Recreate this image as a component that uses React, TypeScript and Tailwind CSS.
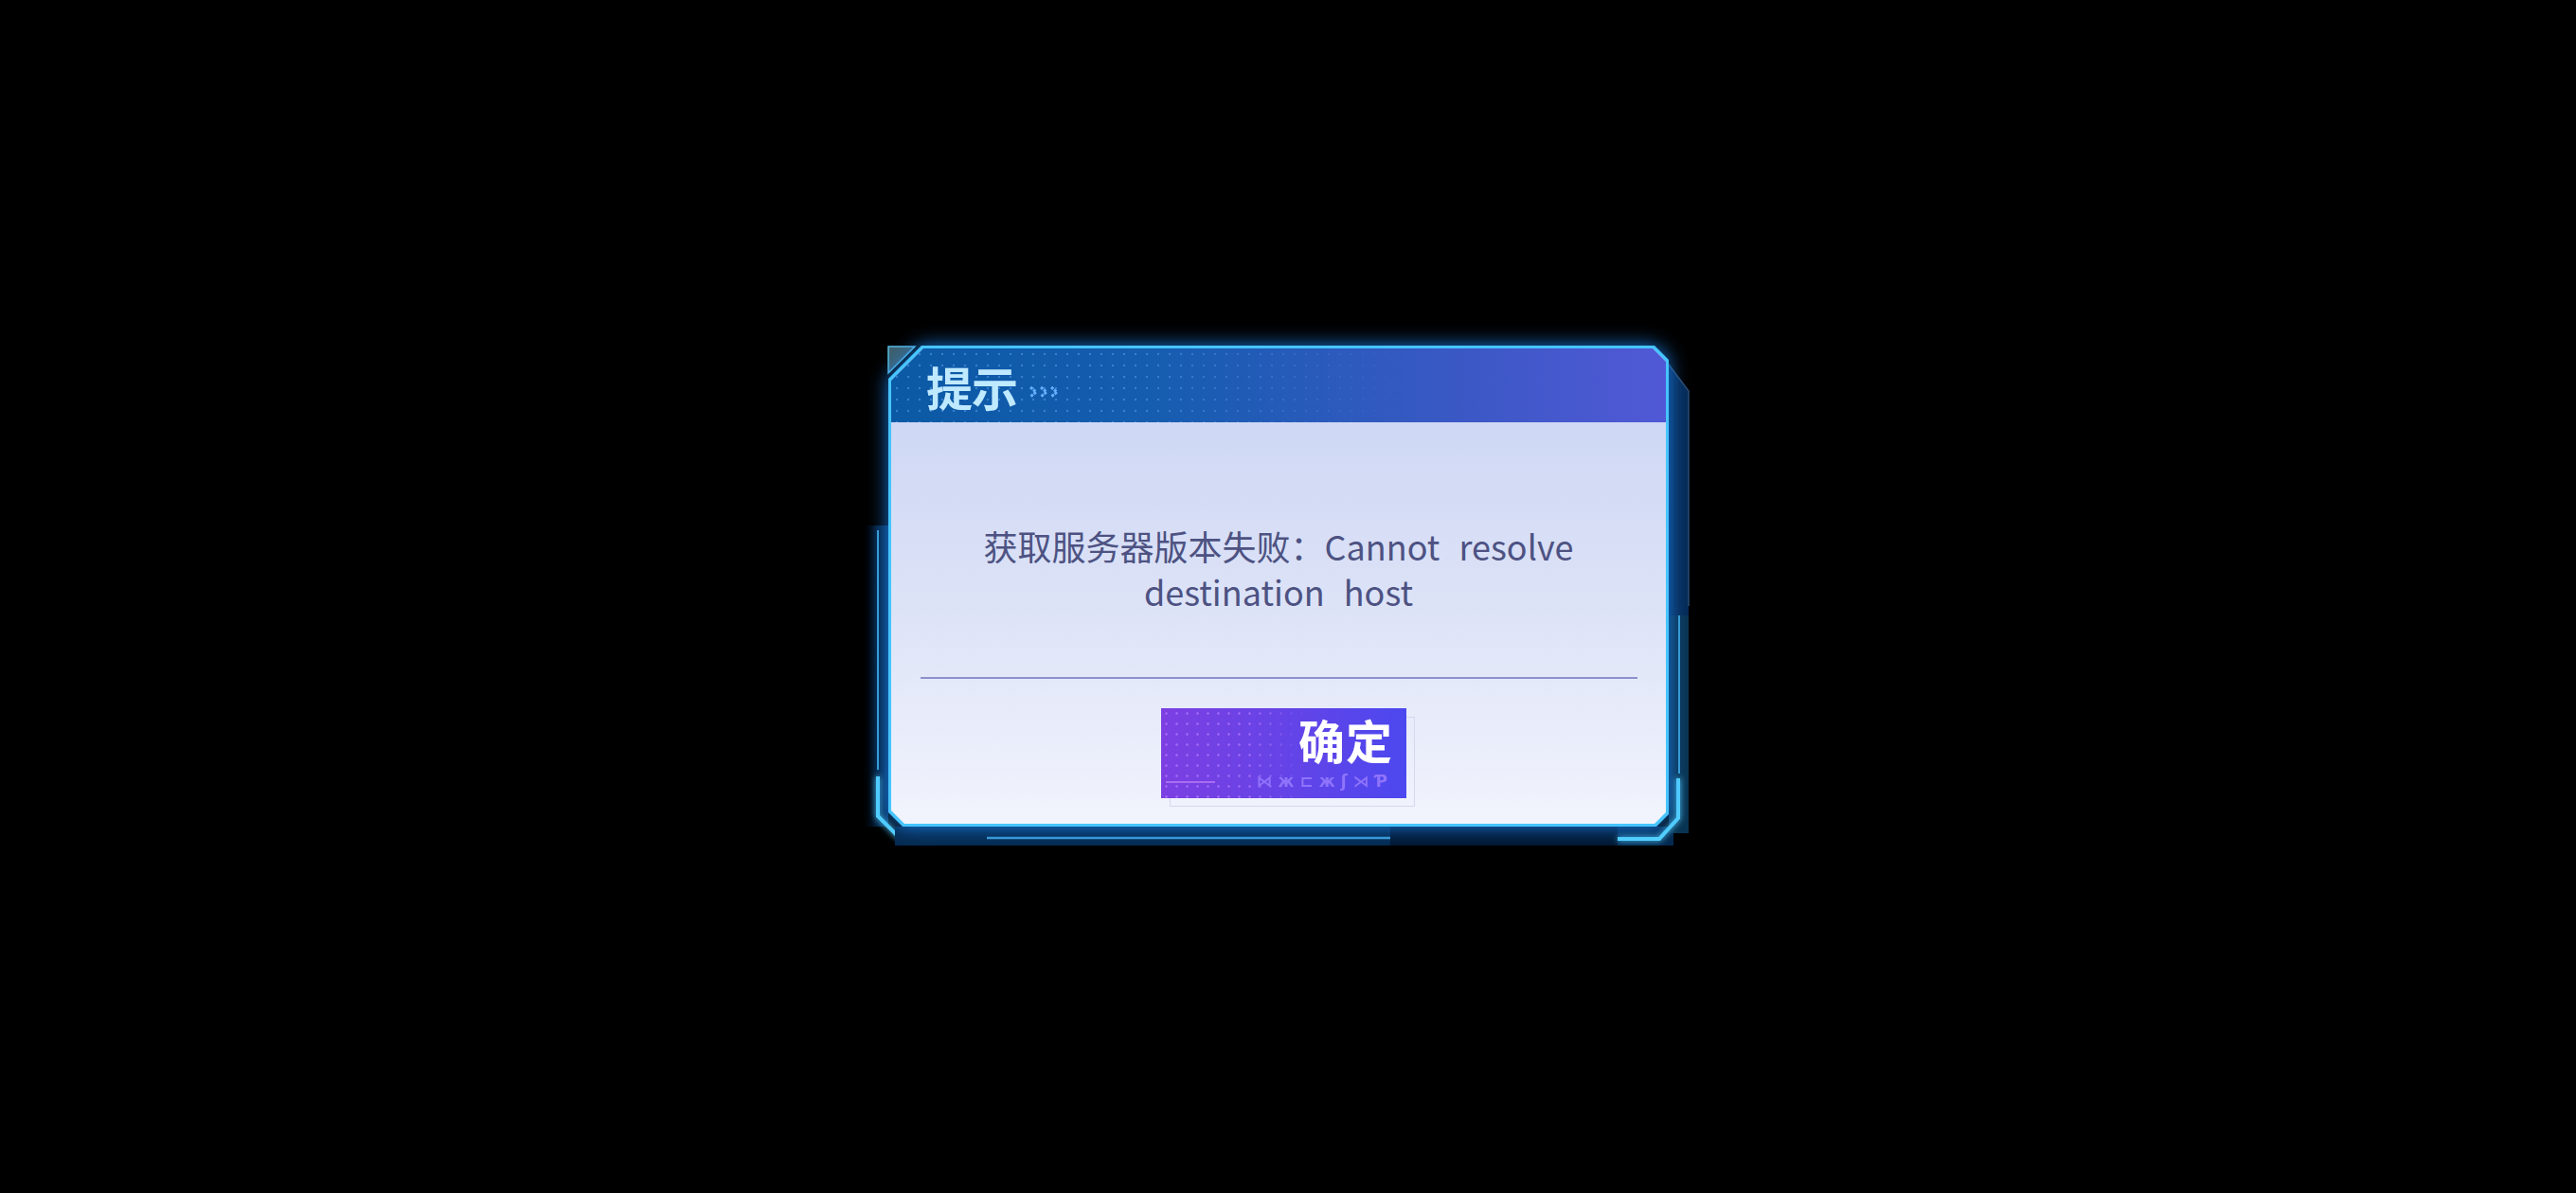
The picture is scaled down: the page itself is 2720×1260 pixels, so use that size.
import React from "react";

// outer bracket lines and dark strips around the panel, drawn in wrapper coords
function FrameDecor() {
  return (
    <svg className="pointer-events-none absolute inset-0 h-full w-full" viewBox="0 0 920 580" fill="none">
      <defs>
        <filter id="glow" x="-50%" y="-50%" width="200%" height="200%">
          <feGaussianBlur stdDeviation="3" result="b" />
          <feMerge>
            <feMergeNode in="b" />
            <feMergeNode in="SourceGraphic" />
          </feMerge>
        </filter>
        <linearGradient id="leftStrip" x1="0" y1="0" x2="1" y2="0">
          <stop offset="0" stopColor="#020d1c" stopOpacity="0" />
          <stop offset="0.5" stopColor="#04213f" />
          <stop offset="1" stopColor="#06305a" />
        </linearGradient>
      </defs>

      {/* left strip */}
      <rect x="12" y="215" width="26" height="318" fill="url(#leftStrip)" />
      <line x1="27" y1="220" x2="27" y2="473" stroke="#3b9fd2" strokeWidth="2" />
      <polyline points="27,480 27,522 50,545 92,545" stroke="#55d3ff" strokeWidth="4" filter="url(#glow)" />

      {/* bottom strip */}
      <rect x="45" y="533" width="822" height="20" fill="#052a50" />
      <rect x="568" y="533" width="240" height="20" fill="#021833" />
      <line x1="142" y1="545" x2="568" y2="545" stroke="#3c9bd2" strokeWidth="2.5" />

      {/* right strip */}
      <polygon points="862,45 883,73 883,310 862,310" fill="#062a55" />
      <polygon points="862,310 883,310 883,540 862,540" fill="#0a3452" />
      <polyline points="862,45 883,73 883,300" stroke="#2a4c70" strokeWidth="1.5" />
      <line x1="873" y1="310" x2="873" y2="477" stroke="#3b9fd2" strokeWidth="2" />
      <polyline points="872,482 872,524 852,546 808,546" stroke="#55d3ff" strokeWidth="4" filter="url(#glow)" />

      {/* top-left corner tab */}
      <polygon points="38,26 66,26 38,54" fill="#3d5f6d" stroke="#58bde4" strokeWidth="1.5" />
    </svg>
  );
}

function Chevrons() {
  return (
    <svg width="34" height="14" viewBox="0 0 34 14" fill="none" stroke="#66b0ff" strokeWidth="3" strokeDasharray="3 1">
      <polyline points="2,2 8,7 2,12" />
      <polyline points="13,2 19,7 13,12" />
      <polyline points="24,2 30,7 24,12" />
    </svg>
  );
}

export default function App() {
  return (
    <div className="flex h-screen w-full items-center justify-center bg-black font-['Noto_Sans_CJK_SC','Noto_Sans',sans-serif]">
      <div className="relative flex h-[580px] w-[920px] items-start pl-[38px] pt-[25px]">
        <FrameDecor />

        {/* panel with chamfered cyan border */}
        <div className="relative drop-shadow-[0_0_10px_rgba(30,140,255,0.85)]">
          <div className="bg-[#46c4ff] p-[3px] [clip-path:polygon(35px_0,calc(100%_-_15px)_0,100%_15px,100%_calc(100%_-_13px),calc(100%_-_13px)_100%,15px_100%,0_calc(100%_-_15px),0_35px)]">
            <div className="flex h-[502px] w-[818px] flex-col bg-[linear-gradient(180deg,#c9d3f3_0%,#dde3f7_55%,#f2f4fd_100%)] [clip-path:polygon(34px_0,calc(100%_-_14px)_0,100%_14px,100%_calc(100%_-_12px),calc(100%_-_12px)_100%,14px_100%,0_calc(100%_-_14px),0_34px)]">
              {/* header */}
              <div className="relative flex h-[78px] shrink-0 items-center bg-[linear-gradient(90deg,#0b59a5_0%,#165db0_35%,#3c58c6_75%,#5159d6_100%)] pl-[37px]">
                <div className="absolute inset-0 bg-[radial-gradient(circle,rgba(90,160,235,0.55)_1.3px,transparent_1.6px)] bg-[length:12px_12px] [mask-image:linear-gradient(90deg,black_0%,black_30%,transparent_70%)]" />
                <span className="relative text-[49px] font-bold leading-none tracking-[-1px] text-[#bfe9ff]">提示</span>
                <span className="relative ml-[12px] mt-[14px]">
                  <Chevrons />
                </span>
              </div>

              {/* body */}
              <div className="flex flex-1 flex-col items-center pt-[106px]">
                <p className="text-center text-[36px] leading-[48px] text-[#4d5282] [word-spacing:12px]">
                  获取服务器版本失败：Cannot resolve
                  <br />
                  destination host
                </p>

                <div className="mt-[67px] h-[2px] w-[757px] bg-[#8c91cc]" />

                <div className="relative ml-[11px] mt-[31px]">
                  <div className="absolute left-[9px] top-[9px] h-full w-full border border-[#d6d9ee]" />
                  <button className="relative flex h-[95px] w-[259px] flex-col items-end bg-[linear-gradient(90deg,#7c3fe2_0%,#6743e6_45%,#4c48ef_100%)] pl-[5px] pr-[14px] pt-[8px]">
                    <div className="absolute inset-0 bg-[radial-gradient(circle,rgba(190,130,255,0.55)_1.2px,transparent_1.5px)] bg-[length:11px_11px] [mask-image:linear-gradient(90deg,black_0%,black_35%,transparent_60%)]" />
                    <span className="relative text-[49px] font-bold leading-none tracking-[1px] text-white">确定</span>
                    <div className="relative mt-[12px] flex w-full items-center justify-between">
                      <span className="h-[2px] w-[52px] bg-[#a96df2]" />
                      <span className="font-['DejaVu_Sans',sans-serif] text-[17px] font-bold leading-[17px] tracking-[6px] text-[#8f74fb]">⋈ж⊏жʃ⋊Ƥ</span>
                    </div>
                  </button>
                </div>
              </div>
            </div>
          </div>
        </div>
      </div>
    </div>
  );
}
